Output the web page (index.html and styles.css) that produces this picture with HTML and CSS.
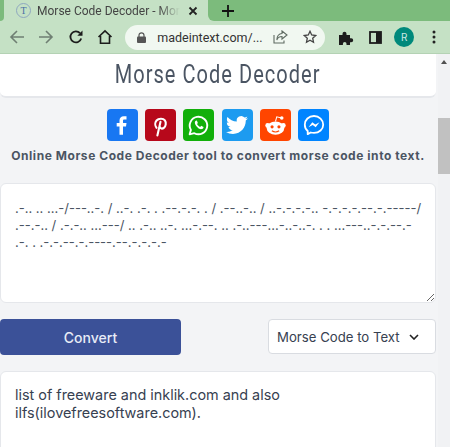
FILE: index.html
```html
<!DOCTYPE html>
<html lang="en">
<head>
    <meta charset="UTF-8">
    <meta name="viewport" content="width=device-width, initial-scale=1.0">
    <title>Morse Code Decoder</title>
    <link rel="stylesheet" href="styles.css">
</head>
<body>
    <div class="tabstrip">
        <div class="strip-left"></div>
        <div class="tab">
            <span class="favicon">T</span>
            <span class="tab-title">Morse Code Decoder - Morse</span>
            <svg class="tab-close" width="10" height="10" viewBox="0 0 10 10"><path d="M1.5 1.5l7 7M8.5 1.5l-7 7" stroke="#222" stroke-width="1.8"/></svg>
        </div>
        <div class="strip-right">
            <svg class="new-tab" width="12" height="12" viewBox="0 0 12 12"><path d="M6 0v12M0 6h12" stroke="#111" stroke-width="1.8"/></svg>
        </div>
    </div>

    <div class="toolbar">
        <svg class="tool" width="16" height="16" viewBox="0 0 16 16"><path d="M15 8H2M8 2L2 8l6 6" fill="none" stroke="#6f7f73" stroke-width="1.6"/></svg>
        <svg class="tool" width="16" height="16" viewBox="0 0 16 16"><path d="M1 8h13M8 2l6 6-6 6" fill="none" stroke="#6f7f73" stroke-width="1.6"/></svg>
        <svg class="tool" width="16" height="16" viewBox="0 0 16 16"><path d="M13.2 9.5A5.5 5.5 0 1 1 12 4.2" fill="none" stroke="#1c1c1c" stroke-width="1.8"/><path d="M14.5 1.5v5.2H9.3z" fill="#1c1c1c"/></svg>
        <svg class="tool" width="16" height="16" viewBox="0 0 16 16"><path d="M1.5 8L8 1.8 14.500 8M3.500 7v7.200h9V7" fill="none" stroke="#1c1c1c" stroke-width="1.600"/></svg>
        <div class="omnibox">
            <svg width="9" height="11" viewBox="0 0 9 11"><path d="M2 5V3.300a2.500 2.500 0 0 1 5 0V5" fill="none" stroke="#555" stroke-width="1.200"/><rect y="4.500" width="9" height="6.500" rx="1" fill="#555"/></svg>
            <span class="url">madeintext.com/...</span>
            <svg class="share" width="15" height="14" viewBox="0 0 15 14"><path d="M9 1l5 4-5 4V6.500C6 6.500 4.500 8 3.800 10 3.800 6 6 3.500 9 3.500zM1 5v8h10v-2.500" fill="none" stroke="#5f6b62" stroke-width="1.100"/></svg>
            <svg class="star" width="14" height="14" viewBox="0 0 14 14"><path d="M7 1.300l1.700 3.700 4 .5-3 2.700.8 4L7 10.200l-3.500 2 .8-4-3-2.700 4-.5z" fill="none" stroke="#444" stroke-width="1.300"/></svg>
        </div>
        <svg class="ext" width="15" height="15" viewBox="0 0 15 15"><path d="M0 5h3.500V3.800a2 2 0 0 1 4 0V5H11v3.200h1.200a2 2 0 0 1 0 4H11V15H7.500v-1.300a1.800 1.800 0 0 0-3.600 0V15H0z" fill="#1c1c1c"/></svg>
        <svg class="panel" width="13" height="13" viewBox="0 0 13 13"><rect x="1" y="1" width="11" height="11" fill="none" stroke="#1c1c1c" stroke-width="1.800"/><rect x="7" y="1" width="5" height="11" fill="#1c1c1c"/></svg>
        <span class="avatar">R</span>
        <svg class="dots" width="4" height="14" viewBox="0 0 4 14"><circle cx="2" cy="2" r="1.500" fill="#222"/><circle cx="2" cy="7" r="1.500" fill="#222"/><circle cx="2" cy="12" r="1.500" fill="#222"/></svg>
    </div>

    <div class="page">
        <div class="content">
            <div class="title-card">
                <h1>Morse Code Decoder</h1>
            </div>

            <div class="share-row">
                <a class="share-btn facebook"><svg viewBox="0 0 24 24" width="24" height="24"><path d="M16.500 3.200h-2.700c-2.700 0-4.300 1.700-4.300 4.300v2.600H6.700v3.500h2.800v8.200h3.500v-8.200h3l.5-3.500H13V8c0-1 .5-1.400 1.400-1.400h2.100z" fill="#fff"/></svg></a>
                <a class="share-btn pinterest"><svg viewBox="0 0 24 24" width="25" height="25"><path d="M8.200 14.200C6.500 12 6.600 9 8.200 7.200c2-2.200 6.300-2.400 8-.1 1.500 2 1 5.700-1 7.200-1.600 1.200-3.500.7-3.900-1M12 8.500L9 21.500" fill="none" stroke="#fff" stroke-width="2" stroke-linecap="round"/></svg></a>
                <a class="share-btn whatsapp"><svg viewBox="0 0 24 24" width="25" height="25"><path d="M3.500 20.500l1.200-4.300A8.400 8.400 0 1 1 8 19.400z" fill="none" stroke="#fff" stroke-width="1.800" stroke-linejoin="round"/><path d="M9.400 7.400c-1.300.8-1.300 2.800.4 5 1.700 2.300 4 3.600 5.600 3 1-.4 1.500-1.200 1.400-2l-2.200-1.100-1 1.100c-1.200-.5-2.300-1.600-3-2.900l.8-1-1-2.300z" fill="#fff"/></svg></a>
                <a class="share-btn twitter"><svg viewBox="0 0 24 24" width="22" height="22"><path d="M23.953 4.570a10 10 0 01-2.825.775 4.958 4.958 0 002.163-2.723c-.951.555-2.005.959-3.127 1.184a4.920 4.920 0 00-8.384 4.482C7.690 8.095 4.067 6.130 1.640 3.162a4.822 4.822 0 00-.666 2.475c0 1.710.870 3.213 2.188 4.096a4.904 4.904 0 01-2.228-.616v.060a4.923 4.923 0 003.946 4.827 4.996 4.996 0 01-2.212.085 4.936 4.936 0 004.604 3.417 9.867 9.867 0 01-6.102 2.105c-.390 0-.779-.023-1.170-.067a13.995 13.995 0 007.557 2.209c9.053 0 13.998-7.496 13.998-13.985 0-.210 0-.420-.015-.630A9.935 9.935 0 0024 4.590z" fill="#fff"/></svg></a>
                <a class="share-btn reddit"><svg viewBox="0 0 24 24" width="25" height="25"><circle cx="4.500" cy="12" r="2.300" fill="#fff"/><circle cx="19.500" cy="12" r="2.300" fill="#fff"/><circle cx="18" cy="4.800" r="1.700" fill="#fff"/><path d="M12 8l1.200-4.300 4.500 1" fill="none" stroke="#fff" stroke-width="1"/><ellipse cx="12" cy="14.500" rx="8.500" ry="6.300" fill="#fff"/><circle cx="8.700" cy="13.300" r="1.500" fill="#ff4500"/><circle cx="15.300" cy="13.300" r="1.500" fill="#ff4500"/><path d="M8.500 17c2 1.400 5 1.400 7 0" fill="none" stroke="#ff4500" stroke-width="1.100"/></svg></a>
                <a class="share-btn messenger"><svg viewBox="0 0 24 24" width="24" height="24"><path d="M12 3C6.800 3 2.800 6.800 2.800 11.700c0 2.600 1.100 4.800 2.900 6.300v3.200l3-1.700c1 .3 2.100.4 3.300.4 5.200 0 9.200-3.700 9.200-8.200S17.200 3 12 3z" fill="none" stroke="#fff" stroke-width="1.800" stroke-linejoin="round"/><path d="M6.500 14.300l3.800-5 3 2.300 4.200-2.300-3.800 5-3-2.300z" fill="#fff"/></svg></a>
            </div>

            <p class="tagline">Online Morse Code Decoder tool to convert morse code into text.</p>

            <textarea class="morse-input" readonly>.-.. .. ...-/---..-. / ..-. .-. . .--.-.-. . / .--..-.. / ..-.-.-.-.. -.-.-.-.--.-.-----/
.--.-.. / .-.-.. ...---/ .. .-.. ..-. ...-.--. .. .-..---...-..-..-. . . ...---..-.-.--.-
.-. . .-.-.--.-.----.--.-.-.-.-</textarea>

            <div class="controls">
                <button class="convert-btn">Convert</button>
                <div class="mode-select">
                    <span>Morse Code to Text</span>
                    <svg width="10" height="6" viewBox="0 0 10 6"><path d="M1 1l4 4 4-4" fill="none" stroke="#222" stroke-width="1.600"/></svg>
                </div>
            </div>

            <div class="output">list of freeware and inklik.com and also<br>ilfs(ilovefreesoftware.com).</div>
        </div>

        <div class="scrollbar">
            <span class="scroll-arrow"></span>
            <div class="scroll-thumb"></div>
        </div>
    </div>
</body>
</html>
```

FILE: styles.css
```css
html, body {
    margin: 0;
    padding: 0;
    height: 447px;
    overflow: hidden;
}
body {
    font-family: 'Inter', sans-serif;
    background-color: #f3f4f6;
    color: #374151;
}
.tabstrip {
    display: flex;
    height: 21px;
    background-color: #c5e1c5;
}
.strip-left {
    width: 4px;
    background-color: #7cbb7c;
    border-radius: 0 0 4px 0;
}
.strip-right {
    flex: 1;
    display: flex;
    align-items: center;
    background-color: #7cbb7c;
    border-radius: 0 0 0 6px;
}
.tab {
    display: flex;
    align-items: center;
    width: 204px;
    padding-left: 12px;
    box-sizing: border-box;
}
.favicon {
    flex: none;
    width: 13px;
    height: 13px;
    border: 1px solid #8fa8c0;
    border-radius: 50%;
    font-family: 'Liberation Serif', serif;
    font-size: 10px;
    line-height: 13px;
    text-align: center;
    color: #4a6fa5;
}
.tab-title {
    flex: none;
    width: 143px;
    margin-left: 6px;
    font-family: 'Roboto', sans-serif;
    font-size: 12px;
    color: #444;
    white-space: nowrap;
    -webkit-mask-image: linear-gradient(to right, #000 85%, transparent 100%);
    mask-image: linear-gradient(to right, #000 85%, transparent 100%);
}
.tab-close {
    margin-left: 8px;
}
.new-tab {
    margin-left: 14px;
}
.toolbar {
    display: flex;
    align-items: center;
    height: 33px;
    background-color: #c5e1c5;
    border-bottom: 1px solid #b4d2b4;
    box-sizing: border-box;
    padding-left: 9px;
}
.tool {
    margin-right: 13.3px;
}
.omnibox {
    display: flex;
    align-items: center;
    width: 200px;
    height: 25px;
    margin-left: -1px;
    padding-left: 12px;
    box-sizing: border-box;
    background-color: #f1f8f1;
    border-radius: 13px;
}
.url {
    flex: none;
    width: 116px;
    margin-left: 11px;
    font-family: 'Roboto', sans-serif;
    font-size: 12.5px;
    color: #333;
    white-space: nowrap;
}
.star {
    margin-left: 15px;
}
.ext {
    margin-left: 14px;
}
.panel {
    margin-left: 15px;
}
.avatar {
    width: 20px;
    height: 20px;
    margin-left: 12px;
    border-radius: 50%;
    background-color: #00897b;
    color: #cfe8e4;
    font-size: 10px;
    line-height: 20px;
    text-align: center;
}
.dots {
    margin-left: 18px;
}
.page {
    display: flex;
    height: 393px;
    overflow: hidden;
}
.content {
    flex: none;
    width: 436px;
}
.title-card {
    height: 44px;
    background-color: #ffffff;
    border-radius: 0 0 6px 6px;
    border-bottom: 2px solid #e5e7eb;
    box-sizing: border-box;
    text-align: center;
}
h1 {
    display: inline-block;
    margin: 0;
    font-family: 'Roboto', sans-serif;
    font-size: 25px;
    font-weight: 400;
    line-height: 41px;
    letter-spacing: 1.3px;
    color: #4b5563;
    white-space: nowrap;
    transform: scaleX(0.8);
}
.share-row {
    display: flex;
    justify-content: center;
    gap: 7.3px;
    margin-top: 11px;
}
.share-btn {
    display: flex;
    align-items: center;
    justify-content: center;
    width: 31px;
    height: 32px;
    border-radius: 4px;
}
.facebook { background-color: #1877f2; }
.pinterest { background-color: #b7081b; }
.whatsapp { background-color: #12af0a; }
.twitter { background-color: #1d9bf0; }
.reddit { background-color: #ff4500; }
.messenger { background-color: #0084ff; }
.tagline {
    margin: 7px 0 0;
    font-size: 12px;
    font-weight: 700;
    line-height: 16px;
    letter-spacing: 0.55px;
    text-align: center;
    color: #4b5563;
    white-space: nowrap;
}
.morse-input {
    display: block;
    width: 100%;
    height: 120px;
    margin-top: 19px;
    padding: 16px 14px;
    box-sizing: border-box;
    background-color: #ffffff;
    border: 1px solid #e5e7eb;
    border-radius: 6px;
    font-family: 'Inter', sans-serif;
    font-size: 13px;
    line-height: 17px;
    color: #4b5563;
    white-space: pre;
    overflow: hidden;
    resize: vertical;
    outline: none;
}
.controls {
    display: flex;
    justify-content: space-between;
    align-items: flex-start;
    margin-top: 16px;
}
.convert-btn {
    width: 181px;
    height: 36px;
    background-color: #3b5198;
    color: #e8ecf6;
    border: none;
    border-radius: 4px;
    font-family: 'Inter', sans-serif;
    font-size: 14px;
    font-weight: 500;
}
.mode-select {
    display: flex;
    align-items: center;
    gap: 9px;
    width: 168px;
    height: 35px;
    padding-left: 8px;
    box-sizing: border-box;
    background-color: #ffffff;
    border: 1px solid #d9dce1;
    border-radius: 4px;
    font-size: 13.2px;
    color: #374151;
}
.output {
    height: 90px;
    margin-top: 16px;
    padding: 14px;
    box-sizing: border-box;
    background-color: #ffffff;
    border: 1px solid #e5e7eb;
    border-radius: 6px;
    font-size: 14.4px;
    line-height: 17.5px;
    color: #374151;
}
.scrollbar {
    flex: 1;
    margin-left: 2px;
    background-color: #f1f2f4;
}
.scroll-arrow {
    display: block;
    width: 0;
    margin: 6px auto 0;
    border-left: 3.500px solid transparent;
    border-right: 3.500px solid transparent;
    border-bottom: 4px solid #505050;
}
.scroll-thumb {
    height: 56px;
    margin-top: 54px;
    background-color: #c1c1c1;
}
```
